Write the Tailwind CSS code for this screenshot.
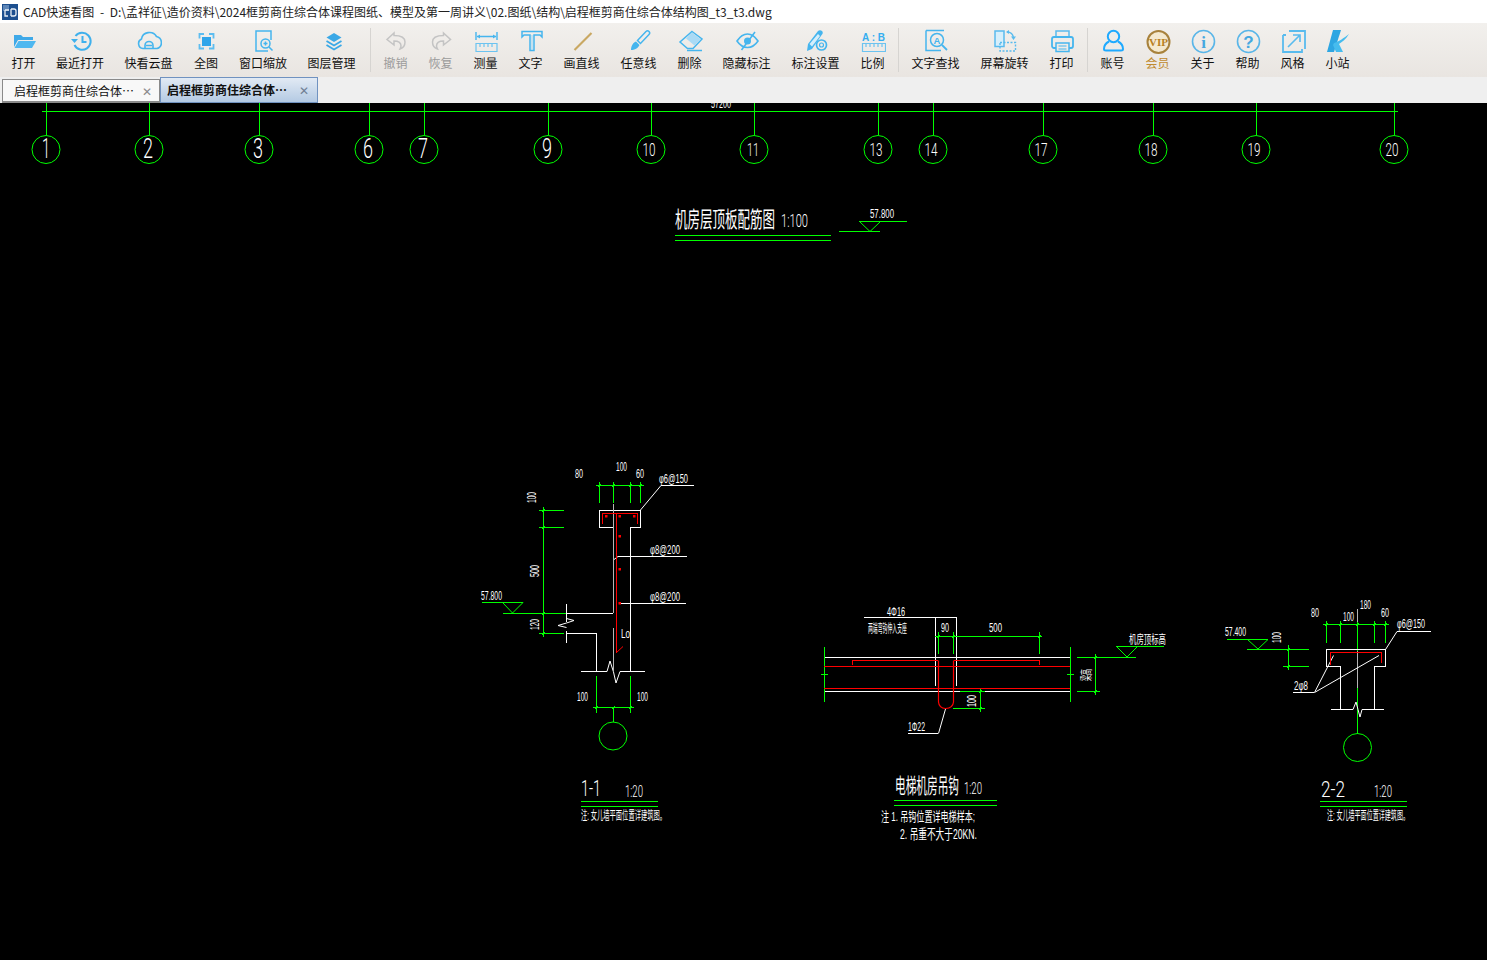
<!DOCTYPE html>
<html lang="zh-CN">
<head>
    <meta charset="UTF-8">
    <title>CAD快速看图</title>
    <script src="https://cdn.jsdelivr.net/npm/@tailwindcss/browser@4"></script>
</head>
<body class="h-[960px] w-[1487px] overflow-hidden bg-black font-['Noto_Sans_CJK_SC','Noto_Sans',sans-serif] text-[12px] text-[#111]">

    <!-- title bar -->
    <header class="flex h-[23px] items-center bg-white pl-[2px]">
        <svg class="h-[16px] w-[16px]" viewBox="0 0 16 16">
            <rect width="16" height="16" fill="#1d4f8f"/>
            <rect x="1" y="1" width="6" height="6" fill="#5d86b8"/>
            <path d="M3 6h4M3 6v6h3M9 5v7M9 5h3a2 2 0 0 1 2 2v3a2 2 0 0 1-2 2H9" fill="none" stroke="#e8eef6" stroke-width="1.3"/>
        </svg>
        <span class="ml-[5px] whitespace-nowrap text-[12px] leading-[23px] tracking-[0px] text-[#222] [word-spacing:3px]">CAD快速看图 - D:\孟祥征\造价资料\2024框剪商住综合体课程图纸、模型及第一周讲义\02.图纸\结构\启程框剪商住综合体结构图_t3_t3.dwg</span>
    </header>

    <!-- toolbar -->
    <nav class="flex h-[54px] bg-linear-to-b from-[#f2f0ed] to-[#e9e5e1] pl-[1px] pt-[5px]">
        <div class="flex w-[45px] flex-col items-center">
            <svg class="h-[26px] w-[26px]" viewBox="0 0 26 26"><path d="M3 7h7l2 2h10v3H7L3 19z" fill="#3fa9e8"/><path d="M7.500 13H25l-4 7H3.500z" fill="#4fb8f0"/></svg>
            <span class="leading-[18px] whitespace-nowrap">打开</span>
        </div>
        <div class="flex w-[68px] flex-col items-center">
            <svg class="h-[26px] w-[26px]" viewBox="0 0 26 26"><path d="M8.500 8a8.500 8.500 0 1 1-1 9" fill="none" stroke="#3fb0ec" stroke-width="2"/><path d="M4 11h7l-3.500 4z" fill="#3fb0ec"/><path d="M15.500 8v6h4" fill="none" stroke="#3fb0ec" stroke-width="2"/></svg>
            <span class="leading-[18px] whitespace-nowrap">最近打开</span>
        </div>
        <div class="flex w-[69px] flex-col items-center">
            <svg class="h-[26px] w-[26px]" viewBox="0 0 26 26"><path d="M7 20.500a5 5 0 0 1-1.500-9.500a8 7.500 0 0 1 15-2.500a6.200 6.200 0 0 1 .5 12z" fill="none" stroke="#45b5ee" stroke-width="1.600"/><path d="M9 20.500v-3a4 4 0 0 1 8 0v3M10 17.500h6" fill="none" stroke="#45b5ee" stroke-width="1.600"/></svg>
            <span class="leading-[18px] whitespace-nowrap">快看云盘</span>
        </div>
        <div class="flex w-[46px] flex-col items-center">
            <svg class="h-[26px] w-[26px]" viewBox="0 0 26 26"><path d="M6.500 10.500V6h4.500M16 6h4.500v4.500M20.500 16v4.500H16M11 20.500H6.500V16" fill="none" stroke="#5dbdf0" stroke-width="1.800"/><rect x="9" y="9" width="9" height="9" fill="#2fa5ea"/></svg>
            <span class="leading-[18px] whitespace-nowrap">全图</span>
        </div>
        <div class="flex w-[68px] flex-col items-center">
            <svg class="h-[26px] w-[26px]" viewBox="0 0 26 26"><path d="M18 23H6V3h15v9" fill="none" stroke="#45b5ee" stroke-width="1.500"/><circle cx="15.500" cy="15.500" r="4.500" fill="none" stroke="#45b5ee" stroke-width="1.500"/><path d="M13.500 15.500h4M15.500 13.500v4M19 19l3.500 3.500" fill="none" stroke="#45b5ee" stroke-width="1.500"/></svg>
            <span class="leading-[18px] whitespace-nowrap">窗口缩放</span>
        </div>
        <div class="flex w-[69px] flex-col items-center">
            <svg class="h-[26px] w-[26px]" viewBox="0 0 26 26"><path d="M15 5l7.500 4.500L15 14 7.500 9.500z" fill="#3aa8e6"/><path d="M7.500 13l7.500 4.500 7.500-4.500M7.500 17l7.500 4.500 7.500-4.500" fill="none" stroke="#3aa8e6" stroke-width="1.800"/></svg>
            <span class="leading-[18px] whitespace-nowrap">图层管理</span>
        </div>
        <div class="ml-[4px] mr-[2px] h-[44px] w-px bg-[#d6d4d1]"></div>
        <div class="flex w-[45px] flex-col items-center text-[#9b9b9b]">
            <svg class="h-[26px] w-[26px]" viewBox="0 0 26 26"><path d="M11 5l-7 6.500 7 5.500v-4c4 0 7 1 7 5 0 1-.5 2-1 3 3-1 5-4 5-7 0-5-5-6.500-11-6.500z" fill="none" stroke="#c4c4c4" stroke-width="1.500"/></svg>
            <span class="leading-[18px] whitespace-nowrap">撤销</span>
        </div>
        <div class="flex w-[45px] flex-col items-center text-[#9b9b9b]">
            <svg class="h-[26px] w-[26px]" viewBox="0 0 26 26"><path d="M15.500 5l7 6.500-7 5.500v-4c-4 0-7 1-7 5 0 1 .5 2 1 3-3-1-5-4-5-7 0-5 5-6.500 11-6.500z" fill="none" stroke="#c4c4c4" stroke-width="1.500"/></svg>
            <span class="leading-[18px] whitespace-nowrap">恢复</span>
        </div>
        <div class="flex w-[45px] flex-col items-center">
            <svg class="h-[26px] w-[26px]" viewBox="0 0 26 26"><path d="M3 4v8M24 4v8M4 8.500h19" fill="none" stroke="#45b5ee" stroke-width="1.400"/><path d="M4 8.500l3-2v4zM23 8.500l-3-2v4z" fill="#45b5ee"/><path d="M3 15.500h21v8H3zM7 15.500v3.500M11 15.500v3.500M15 15.500v3.500M19 15.500v3.500" fill="none" stroke="#6cc3f0" stroke-width="1.200"/></svg>
            <span class="leading-[18px] whitespace-nowrap">测量</span>
        </div>
        <div class="flex w-[45px] flex-col items-center">
            <svg class="h-[26px] w-[26px]" viewBox="0 0 26 26"><path d="M4 3.500h20v5.500l-2 -2H16v15.500h-4V7H6L4 9z" fill="none" stroke="#45b5ee" stroke-width="1.500"/><path d="M14 7v15" stroke="#9bd6f5" stroke-width="1"/></svg>
            <span class="leading-[18px] whitespace-nowrap">文字</span>
        </div>
        <div class="flex w-[57px] flex-col items-center">
            <svg class="h-[26px] w-[26px]" viewBox="0 0 26 26"><path d="M5.500 22L22.500 5" stroke="#c9a862" stroke-width="2.200"/></svg>
            <span class="leading-[18px] whitespace-nowrap">画直线</span>
        </div>
        <div class="flex w-[57px] flex-col items-center">
            <svg class="h-[26px] w-[26px]" viewBox="0 0 26 26"><path d="M11.500 12.500L20 3.500c1-1 2-1 3 0s1 2 0 3L14.500 15.500z" fill="none" stroke="#45b5ee" stroke-width="1.500"/><path d="M10 13.500l3.500 3.500c-1 2-2 3-3 3.500-2 1-4 1.500-5.500 1.500 0-2 .5-4 1.500-5.500.8-1.300 2-2.500 3.500-3z" fill="#45b5ee"/></svg>
            <span class="leading-[18px] whitespace-nowrap">任意线</span>
        </div>
        <div class="flex w-[45px] flex-col items-center">
            <svg class="h-[26px] w-[26px]" viewBox="0 0 26 26"><path d="M15 3.500l10 7.500-9 9.500H10.500L3 14z" fill="none" stroke="#45b5ee" stroke-width="1.500"/><path d="M15 4.500l8.500 6.500-6 6.500L9 10.500z" fill="#a9daf5"/><path d="M10 22.500h15" stroke="#45b5ee" stroke-width="1.500"/></svg>
            <span class="leading-[18px] whitespace-nowrap">删除</span>
        </div>
        <div class="flex w-[69px] flex-col items-center">
            <svg class="h-[26px] w-[26px]" viewBox="0 0 26 26"><path d="M3 13c3-4.500 7-7 10.500-7S21 8.500 24 13c-3 4.500-7 6.500-10.500 6.500S6 17.500 3 13z" fill="none" stroke="#45b5ee" stroke-width="1.600"/><circle cx="13.500" cy="13" r="3.500" fill="#45b5ee"/><path d="M7.500 22L21 4" stroke="#45b5ee" stroke-width="1.600"/></svg>
            <span class="leading-[18px] whitespace-nowrap">隐藏标注</span>
        </div>
        <div class="flex w-[69px] flex-col items-center">
            <svg class="h-[26px] w-[26px]" viewBox="0 0 26 26"><path d="M4 23l1-7L15 3c1-1 3-1 4 0s1 2.500 0 3.500L9 21z" fill="#45b5ee"/><path d="M6.500 16l2.500 2.500 8-10.500-2-2z" fill="#d5eefb"/><circle cx="18.500" cy="17" r="5" fill="#efece8" stroke="#45b5ee" stroke-width="1.700"/><circle cx="18.500" cy="17" r="2" fill="none" stroke="#45b5ee" stroke-width="1.200"/></svg>
            <span class="leading-[18px] whitespace-nowrap">标注设置</span>
        </div>
        <div class="flex w-[45px] flex-col items-center">
            <svg class="h-[26px] w-[26px]" viewBox="0 0 26 26"><text x="13.500" y="12.500" text-anchor="middle" font-size="10" font-weight="700" textLength="23" lengthAdjust="spacing" class="fill-[#35aef0] font-['Liberation_Sans']">A:B</text><path d="M2.500 15.500h23v8h-23zM6 15.500V19M10 15.500V19M14 15.500V19M18 15.500V19M22 15.500V19" fill="none" stroke="#6cc3f0" stroke-width="1.200"/></svg>
            <span class="leading-[18px] whitespace-nowrap">比例</span>
        </div>
        <div class="ml-[3px] mr-[2px] h-[44px] w-px bg-[#d6d4d1]"></div>
        <div class="flex w-[69px] flex-col items-center">
            <svg class="h-[26px] w-[26px]" viewBox="0 0 26 26"><path d="M3 2.500h18M3 2.500v20h15" fill="none" stroke="#45b5ee" stroke-width="1.500"/><circle cx="14" cy="12" r="6.500" fill="none" stroke="#45b5ee" stroke-width="1.500"/><path d="M19 17l5 5" stroke="#45b5ee" stroke-width="1.800"/><text x="14" y="15.500" text-anchor="middle" font-size="9.500" font-weight="700" class="fill-[#45b5ee] font-['Liberation_Sans']">A</text></svg>
            <span class="leading-[18px] whitespace-nowrap">文字查找</span>
        </div>
        <div class="flex w-[69px] flex-col items-center">
            <svg class="h-[26px] w-[26px]" viewBox="0 0 26 26"><rect x="3" y="3" width="9" height="15.500" fill="#d7effb" stroke="#59bbee" stroke-width="1.500"/><path d="M8 14.500h15.500v8.500H8z" fill="none" stroke="#59bbee" stroke-width="1.400" stroke-dasharray="2 1.500"/><path d="M15 4c3 0 6 2 6.500 6" fill="none" stroke="#59bbee" stroke-width="1.400"/><path d="M19 8.500h5l-2.500 3.500zM17 2v4l-3-2z" fill="#59bbee"/></svg>
            <span class="leading-[18px] whitespace-nowrap">屏幕旋转</span>
        </div>
        <div class="flex w-[45px] flex-col items-center">
            <svg class="h-[26px] w-[26px]" viewBox="0 0 26 26"><path d="M7 9V3h13v6" fill="none" stroke="#59bbee" stroke-width="1.500"/><rect x="3" y="9" width="21" height="11" rx="2" fill="none" stroke="#45b5ee" stroke-width="1.800"/><rect x="7" y="15" width="13" height="8.500" fill="#efece8" stroke="#45b5ee" stroke-width="1.500"/><path d="M9.500 18h8M9.500 21h8" stroke="#45b5ee" stroke-width="1.200"/></svg>
            <span class="leading-[18px] whitespace-nowrap">打印</span>
        </div>
        <div class="ml-[3px] mr-[2px] h-[44px] w-px bg-[#d6d4d1]"></div>
        <div class="flex w-[45px] flex-col items-center">
            <svg class="h-[26px] w-[26px]" viewBox="0 0 26 26"><circle cx="13.500" cy="8.500" r="5.700" fill="none" stroke="#1faaff" stroke-width="2"/><path d="M9 13.500c-3 1.500-5 4.500-5 7.500 0 1 1 1.500 2 1.500h15c1 0 2-.5 2-1.500 0-3-2-6-5-7.500" fill="none" stroke="#1faaff" stroke-width="2"/></svg>
            <span class="leading-[18px] whitespace-nowrap">账号</span>
        </div>
        <div class="flex w-[45px] flex-col items-center text-[#c08a2e]">
            <svg class="h-[26px] w-[26px]" viewBox="0 0 26 26"><circle cx="13.500" cy="14" r="11" fill="#f4e9cf" stroke="#a8823c" stroke-width="2"/><text x="13.500" y="17.500" text-anchor="middle" font-size="10.500" font-weight="700" textLength="19" lengthAdjust="spacingAndGlyphs" class="fill-[#b8801f] font-['Liberation_Serif']">VIP</text></svg>
            <span class="leading-[18px] whitespace-nowrap">会员</span>
        </div>
        <div class="flex w-[45px] flex-col items-center">
            <svg class="h-[26px] w-[26px]" viewBox="0 0 26 26"><circle cx="13.500" cy="13.500" r="11" fill="none" stroke="#5ab6e8" stroke-width="1.600"/><text x="13.500" y="20" text-anchor="middle" font-size="17" font-weight="700" class="fill-[#45a8e0] font-['Liberation_Serif']">i</text></svg>
            <span class="leading-[18px] whitespace-nowrap">关于</span>
        </div>
        <div class="flex w-[45px] flex-col items-center">
            <svg class="h-[26px] w-[26px]" viewBox="0 0 26 26"><circle cx="13.500" cy="13.500" r="11" fill="none" stroke="#5ab6e8" stroke-width="1.600"/><text x="13.500" y="19.500" text-anchor="middle" font-size="17" font-weight="700" class="fill-[#45a8e0] font-['Liberation_Sans']">?</text></svg>
            <span class="leading-[18px] whitespace-nowrap">帮助</span>
        </div>
        <div class="flex w-[45px] flex-col items-center">
            <svg class="h-[26px] w-[26px]" viewBox="0 0 26 26"><path d="M9 3h16v18" fill="none" stroke="#59bbee" stroke-width="1.800"/><path d="M3 7v17h19v-3M3 7h3" fill="none" stroke="#59bbee" stroke-width="1.800"/><path d="M8 19L20 7M13 7h7v7" fill="none" stroke="#59bbee" stroke-width="1.600"/></svg>
            <span class="leading-[18px] whitespace-nowrap">风格</span>
        </div>
        <div class="flex w-[45px] flex-col items-center">
            <svg class="h-[26px] w-[26px]" viewBox="0 0 26 26"><path d="M8 2h8L9 24H2z" fill="#2ea6e2"/><path d="M9 15c4-1 10-5 15-9-3 5-7 8-10 10l4 8h-7l-3-7z" fill="#46bcee"/></svg>
            <span class="leading-[18px] whitespace-nowrap">小站</span>
        </div>
    </nav>

    <!-- document tabs -->
    <div class="flex h-[26px] bg-[#efefef] pl-[2px]">
        <div class="mt-[2px] flex h-[24px] w-[158px] items-center border-x border-t border-b-2 border-[#8a8a8a] bg-[#f8f8f8] pl-[11px]">
            <span class="w-[121px] overflow-hidden whitespace-nowrap">启程框剪商住综合体⋯</span>
            <span class="ml-[7px] text-[12px] leading-none text-[#8a8a8a]">✕</span>
        </div>
        <div class="flex h-[26px] w-[158px] items-center border border-[#7092c0] bg-linear-to-b from-[#e2eaf4] to-[#b4cae3] pl-[6px]">
            <span class="w-[129px] overflow-hidden whitespace-nowrap font-bold text-[#111]">启程框剪商住综合体⋯</span>
            <span class="ml-[3px] text-[12px] leading-none text-[#6f7f93]">✕</span>
        </div>
    </div>

    <!-- drawing canvas -->
    <svg class="block h-[857px] w-[1487px] bg-black font-['Liberation_Sans','Noto_Sans_CJK_SC',sans-serif]" viewBox="0 103 1487 857">
        <!-- axis row -->
        <g fill="none" stroke="#00ff00" stroke-width="1" shape-rendering="crispEdges">
            <path d="M42 111.500H1398"/>
            <path d="M46.500 103V135M149.500 103V135M259.500 103V135M369.500 103V135M424.500 103V135M548.500 103V135M651.500 103V135M754.500 103V135M878.500 103V135M933.500 103V135M1043.500 103V135M1153.500 103V135M1256.500 103V135M1394.500 103V135"/>
        </g>
        <g fill="none" stroke="#00ff00" stroke-width="1">
            <circle cx="46" cy="149.500" r="14"/><circle cx="149" cy="149.500" r="14"/><circle cx="259" cy="149.500" r="14"/><circle cx="369" cy="149.500" r="14"/><circle cx="424" cy="149.500" r="14"/><circle cx="548" cy="149.500" r="14"/><circle cx="651" cy="149.500" r="14"/><circle cx="754" cy="149.500" r="14"/><circle cx="878" cy="149.500" r="14"/><circle cx="933" cy="149.500" r="14"/><circle cx="1043" cy="149.500" r="14"/><circle cx="1153" cy="149.500" r="14"/><circle cx="1256" cy="149.500" r="14"/><circle cx="1394" cy="149.500" r="14"/>
        </g>
        <g class="fill-white font-['Roboto'] font-light" text-anchor="middle">
            <text x="46" y="158" font-size="27" textLength="8" lengthAdjust="spacingAndGlyphs">1</text>
            <text x="148" y="158" font-size="27" textLength="10" lengthAdjust="spacingAndGlyphs">2</text>
            <text x="258" y="158" font-size="27" textLength="10" lengthAdjust="spacingAndGlyphs">3</text>
            <text x="368" y="158" font-size="27" textLength="10" lengthAdjust="spacingAndGlyphs">6</text>
            <text x="423" y="158" font-size="27" textLength="10" lengthAdjust="spacingAndGlyphs">7</text>
            <text x="547" y="158" font-size="27" textLength="10" lengthAdjust="spacingAndGlyphs">9</text>
            <text x="649" y="156" font-size="18" textLength="13" lengthAdjust="spacingAndGlyphs">10</text>
            <text x="753" y="156" font-size="18" textLength="12" lengthAdjust="spacingAndGlyphs">11</text>
            <text x="876" y="156" font-size="18" textLength="13" lengthAdjust="spacingAndGlyphs">13</text>
            <text x="931" y="156" font-size="18" textLength="13" lengthAdjust="spacingAndGlyphs">14</text>
            <text x="1041" y="156" font-size="18" textLength="13" lengthAdjust="spacingAndGlyphs">17</text>
            <text x="1151" y="156" font-size="18" textLength="13" lengthAdjust="spacingAndGlyphs">18</text>
            <text x="1254" y="156" font-size="18" textLength="13" lengthAdjust="spacingAndGlyphs">19</text>
            <text x="1392" y="156" font-size="18" textLength="13" lengthAdjust="spacingAndGlyphs">20</text>
        </g>
        <text x="711" y="108" font-size="12" textLength="20" lengthAdjust="spacingAndGlyphs" class="fill-white">57200</text>

        <!-- roof slab title -->
        <g fill="none" stroke="#00ff00" stroke-width="1" shape-rendering="crispEdges">
            <path d="M675 235.500H831M675 240.500H831M859 221.500H907M839 231.500H880"/>
        </g>
        <path d="M859.500 221.500L870 231.500L880.500 221.500" fill="none" stroke="#00ff00"/>
        <g class="fill-white">
            <text x="675" y="227" font-size="22" textLength="100" lengthAdjust="spacingAndGlyphs">机房层顶板配筋图</text>
            <text x="781" y="227" font-size="18" textLength="27" lengthAdjust="spacingAndGlyphs" class="font-['Roboto'] font-light">1:100</text>
            <text x="870" y="218" font-size="12" textLength="24" lengthAdjust="spacingAndGlyphs">57.800</text>
        </g>

        <!-- section 1-1 -->
        <g fill="none" stroke="#00ff00" stroke-width="1" shape-rendering="crispEdges">
            <path d="M596 485.500H644M599.500 482V503M613.500 482V503M630.500 482V503M640.500 482V503"/>
            <path d="M543.500 507V637M539 510.500H564M539 527.500H564M503 613.500H566M539 633.500H564"/>
            <path d="M482 602.500H523"/>
            <path d="M593 707.500H634M596.500 676V713M613.500 707V722M630.500 676V713"/>
        </g>
        <path d="M598 487L601 484M612 487L615 484M629 487L632 484M639 487L642 484M542 512L545 509M542 529L545 526M542 615L545 612M542 635L545 632M595 709L598 706M612 709L615 706M629 709L632 706" fill="none" stroke="#00ff00"/>
        <path d="M502.500 602.500L512.500 613L523 602.500" fill="none" stroke="#00ff00"/>
        <circle cx="613" cy="736" r="14" fill="none" stroke="#00ff00"/>
        <g fill="none" stroke="#ffffff" stroke-width="1" shape-rendering="crispEdges">
            <path d="M613 527.500H599.500V510.500H640.500V527.500H630.500V671.500"/>
            <path d="M566 613.500H613M566.500 604V622M566.500 631V643M566 633.500H596.500V671.500M581 671.500H607M620 671.500H645M694 485.500H661M618 556.500H687M620 603.500H686"/>
        </g>
        <path d="M566.500 618.500L574 620.500L566.500 623L558 625.500L566.500 627.500M607 671.500L610 661L613.500 672L616 683L620 671.500M640.500 510L661 485.500M614 559.500L618 556.500" fill="none" stroke="#ffffff"/>
        <path d="M613.500 504V613M613.500 628V672" fill="none" stroke="#b5b5b5" shape-rendering="crispEdges"/>
        <g fill="none" stroke="#ff0000" stroke-width="1.300" shape-rendering="crispEdges">
            <path d="M602.500 524V513.500H637.500V524M616.500 513.500V653"/>
        </g>
        <path d="M616.500 652.500L623 646.500" stroke="#ff0000" fill="none"/>
        <g fill="#ff0000">
            <rect x="605" y="515" width="2.500" height="2.500"/><rect x="618.500" y="515" width="2.500" height="2.500"/><rect x="633" y="515" width="2.500" height="2.500"/><rect x="618.500" y="535" width="2.500" height="2.500"/><rect x="618.500" y="568" width="2.500" height="2.500"/><rect x="618.500" y="602" width="2.500" height="2.500"/>
        </g>
        <g class="fill-white">
            <text x="575" y="478" font-size="12" textLength="8" lengthAdjust="spacingAndGlyphs">80</text>
            <text x="616" y="471" font-size="12" textLength="11" lengthAdjust="spacingAndGlyphs">100</text>
            <text x="636" y="478" font-size="12" textLength="8" lengthAdjust="spacingAndGlyphs">60</text>
            <text x="659" y="483" font-size="12" textLength="29" lengthAdjust="spacingAndGlyphs">φ6@150</text>
            <text x="650" y="554" font-size="12" textLength="30" lengthAdjust="spacingAndGlyphs">φ8@200</text>
            <text x="650" y="601" font-size="12" textLength="30" lengthAdjust="spacingAndGlyphs">φ8@200</text>
            <text x="621" y="638" font-size="12" textLength="9" lengthAdjust="spacingAndGlyphs">Lo</text>
            <text x="481" y="600" font-size="12" textLength="21" lengthAdjust="spacingAndGlyphs">57.800</text>
            <text x="577" y="701" font-size="12" textLength="11" lengthAdjust="spacingAndGlyphs">100</text>
            <text x="637" y="701" font-size="12" textLength="11" lengthAdjust="spacingAndGlyphs">100</text>
            <text transform="rotate(-90 536 503)" x="536" y="503" font-size="12" textLength="11" lengthAdjust="spacingAndGlyphs">100</text>
            <text transform="rotate(-90 539 577)" x="539" y="577" font-size="12" textLength="12" lengthAdjust="spacingAndGlyphs">500</text>
            <text transform="rotate(-90 539 630)" x="539" y="630" font-size="12" textLength="11" lengthAdjust="spacingAndGlyphs">120</text>
            <text x="581" y="796" font-size="22" textLength="20" lengthAdjust="spacingAndGlyphs" class="font-['Roboto'] font-light">1-1</text>
            <text x="625" y="797" font-size="16" textLength="18" lengthAdjust="spacingAndGlyphs" class="font-['Roboto'] font-light">1:20</text>
            <text x="581" y="820" font-size="12" textLength="85" lengthAdjust="spacingAndGlyphs">注: 女儿墙平面位置详建筑图。</text>
        </g>
        <path d="M581 801.500H658M581 806.500H658" stroke="#00ff00" shape-rendering="crispEdges"/>

        <!-- elevator machine room hook -->
        <g fill="none" stroke="#ffffff" stroke-width="1" shape-rendering="crispEdges">
            <path d="M824 657.500H1070M824 691.500H960M985 691.500H1070M864 617.500H956.500M935.500 617V686M956.500 617V686M908 733.500H938"/>
        </g>
        <path d="M945.500 709L938.500 733.500" fill="none" stroke="#ffffff"/>
        <g fill="none" stroke="#00ff00" stroke-width="1" shape-rendering="crispEdges">
            <path d="M824.500 647V702M1070.500 647V702M821 674.500H828M1067 674.500H1074"/>
            <path d="M935 636.500H1042M938.500 632V654M953.500 632V654M1039.500 632V654"/>
            <path d="M1116 646.500H1164M1077 657.500H1136M1095.500 654V695M1077 691.500H1100"/>
            <path d="M960 691.500H985M980.500 688V712M953 708.500H985"/>
        </g>
        <path d="M937 638L940 635M952 638L955 635M1038 638L1041 635M1094 659L1097 656M1094 693L1097 690M979 693L982 690M979 710L982 707" fill="none" stroke="#00ff00"/>
        <path d="M1116.500 646.500L1127 657L1137.500 646.500" fill="none" stroke="#00ff00"/>
        <g fill="none" stroke="#ff0000" stroke-width="1.200">
            <path d="M824 666.500H1070M824 688.500H1070M852.500 664.500V660.500H938M1039.500 664.500V660.500H953.500" shape-rendering="crispEdges"/>
            <path d="M938.500 660.500V702Q939 708 945.500 708.500Q953 708 953.500 702V660.500"/>
        </g>
        <g class="fill-white">
            <text x="887" y="616" font-size="12" textLength="18" lengthAdjust="spacingAndGlyphs">4Φ16</text>
            <text x="868" y="633" font-size="12" textLength="39" lengthAdjust="spacingAndGlyphs">两端弯钩伸入支座</text>
            <text x="941" y="632" font-size="12" textLength="8" lengthAdjust="spacingAndGlyphs">90</text>
            <text x="989" y="632" font-size="12" textLength="13" lengthAdjust="spacingAndGlyphs">500</text>
            <text x="1129" y="644" font-size="12" textLength="37" lengthAdjust="spacingAndGlyphs">机房顶标高</text>
            <text x="908" y="731" font-size="12" textLength="17" lengthAdjust="spacingAndGlyphs">1Φ22</text>
            <text transform="rotate(-90 1091 681)" x="1091" y="681" font-size="12" textLength="12" lengthAdjust="spacingAndGlyphs">梁高</text>
            <text transform="rotate(-90 976 707)" x="976" y="707" font-size="12" textLength="12" lengthAdjust="spacingAndGlyphs">100</text>
            <text x="895" y="793" font-size="21" textLength="64" lengthAdjust="spacingAndGlyphs">电梯机房吊钩</text>
            <text x="964" y="794" font-size="16" textLength="18" lengthAdjust="spacingAndGlyphs" class="font-['Roboto'] font-light">1:20</text>
            <text x="881" y="821" font-size="13" textLength="94" lengthAdjust="spacingAndGlyphs">注 1. 吊钩位置详电梯样本;</text>
            <text x="900" y="839" font-size="14" textLength="77" lengthAdjust="spacingAndGlyphs">2. 吊重不大于20KN.</text>
        </g>
        <path d="M894 800.500H997M894 805.500H997" stroke="#00ff00" shape-rendering="crispEdges"/>

        <!-- section 2-2 -->
        <g fill="none" stroke="#00ff00" stroke-width="1" shape-rendering="crispEdges">
            <path d="M1323 624.500H1389M1326.500 621V643M1340.500 621V643M1374.500 621V643M1385.500 621V643"/>
            <path d="M1357.500 622V651M1357.500 688V734"/>
            <path d="M1227 639.500H1268M1247 649.500H1309M1283 666.500H1309M1288.500 645V670"/>
        </g>
        <path d="M1325 626L1328 623M1339 626L1342 623M1356 626L1359 623M1373 626L1376 623M1384 626L1387 623M1287 651L1290 648M1287 668L1290 665" fill="none" stroke="#00ff00"/>
        <path d="M1247.500 639.500L1258 649L1268 639.500" fill="none" stroke="#00ff00"/>
        <circle cx="1357.500" cy="747.500" r="14" fill="none" stroke="#00ff00"/>
        <path d="M1357.500 609V622M1357.500 651V688" stroke="#b5b5b5" shape-rendering="crispEdges"/>
        <g fill="none" stroke="#ffffff" stroke-width="1" shape-rendering="crispEdges">
            <path d="M1340.500 666.500H1326.500V649.500H1385.500V666.500H1374.500V709.500M1340.500 666.500V709.500M1331 709.500H1353M1362 709.500H1384M1293 692.500H1314M1397 631.500H1431"/>
        </g>
        <path d="M1353 709.500L1356 702L1358 709.500L1360 717L1362 709.500M1314.500 692.500L1333.500 655.500M1314.500 692.500L1379 655.500M1385.500 649.500L1397 631.500" fill="none" stroke="#ffffff"/>
        <path d="M1330.500 665V652.500H1381.500V663" fill="none" stroke="#ff0000" stroke-width="1.300" shape-rendering="crispEdges"/>
        <g class="fill-white">
            <text x="1311" y="617" font-size="12" textLength="8" lengthAdjust="spacingAndGlyphs">80</text>
            <text x="1343" y="621" font-size="12" textLength="11" lengthAdjust="spacingAndGlyphs">100</text>
            <text x="1360" y="609" font-size="12" textLength="11" lengthAdjust="spacingAndGlyphs">180</text>
            <text x="1381" y="617" font-size="12" textLength="8" lengthAdjust="spacingAndGlyphs">60</text>
            <text x="1397" y="628" font-size="12" textLength="28" lengthAdjust="spacingAndGlyphs">φ6@150</text>
            <text x="1225" y="636" font-size="12" textLength="21" lengthAdjust="spacingAndGlyphs">57.400</text>
            <text x="1294" y="690" font-size="12" textLength="14" lengthAdjust="spacingAndGlyphs">2φ8</text>
            <text transform="rotate(-90 1281 643)" x="1281" y="643" font-size="12" textLength="11" lengthAdjust="spacingAndGlyphs">100</text>
            <text x="1321" y="797" font-size="22" textLength="24" lengthAdjust="spacingAndGlyphs" class="font-['Roboto'] font-light">2-2</text>
            <text x="1374" y="797" font-size="16" textLength="18" lengthAdjust="spacingAndGlyphs" class="font-['Roboto'] font-light">1:20</text>
            <text x="1327" y="820" font-size="12" textLength="82" lengthAdjust="spacingAndGlyphs">注: 女儿墙平面位置详建筑图。</text>
        </g>
        <path d="M1320 801.500H1407M1320 806.500H1407" stroke="#00ff00" shape-rendering="crispEdges"/>
    </svg>

</body>
</html>
